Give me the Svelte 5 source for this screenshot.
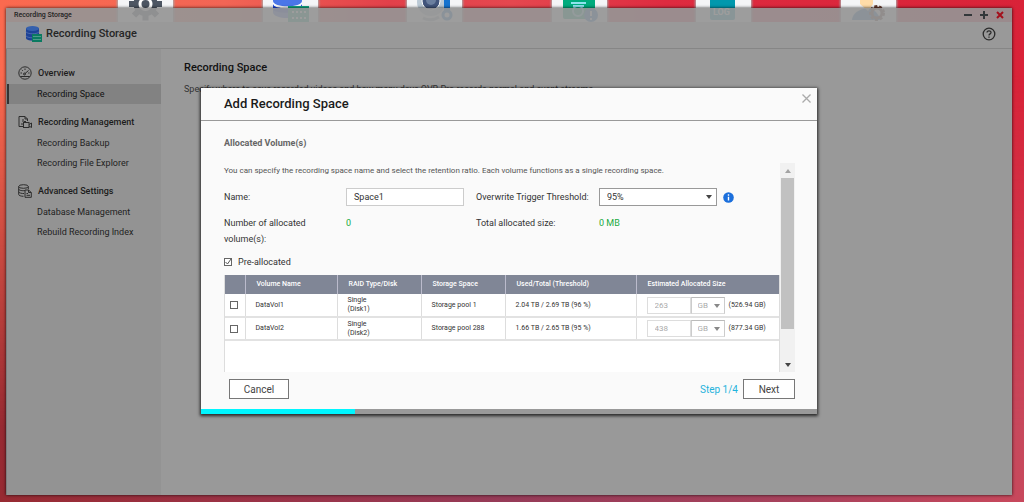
<script>
  let name = $state('Space1');
  let threshold = $state('95%');
  let preallocated = $state(true);
  let volumes = $state([
    { id: 1, name: 'DataVol1', disk: '(Disk1)', pool: 'Storage pool 1', used: '2.04 TB / 2.69 TB (96 %)', size: '263', max: '(526.94 GB)', checked: false },
    { id: 2, name: 'DataVol2', disk: '(Disk2)', pool: 'Storage pool 288', used: '1.66 TB / 2.65 TB (95 %)', size: '438', max: '(877.34 GB)', checked: false }
  ]);
  const step = 1;
  const steps = 4;
  const groups = [
    { icon: 'gauge', title: 'Overview', items: ['Recording Space'] },
    { icon: 'record', title: 'Recording Management', items: ['Recording Backup', 'Recording File Explorer'] },
    { icon: 'database', title: 'Advanced Settings', items: ['Database Management', 'Rebuild Recording Index'] }
  ];
  const current = 'Recording Space';
</script>

<div class="desktop">
  <div class="shortcuts" aria-hidden="true">
    <div class="tile">
      <svg viewBox="0 0 55 22"><g fill="#4d5663"><circle cx="27.500" cy="4" r="12" /><g stroke="#4d5663" stroke-width="6"><path d="M11 4H44M27.500-12V20.500M16-7.500L39 15.500M39-7.500L16 15.500" /></g></g><circle cx="27.500" cy="4" r="7" fill="#fff" /><circle cx="27.500" cy="4" r="4" fill="#4d5663" /></svg>
    </div>
    <div class="tile">
      <svg viewBox="0 0 55 22"><path d="M10-4V12C10 20 39 20 39 12V-4Z" fill="#4a76e8" /><path d="M10 1C10 8 39 8 39 1V4C39 10 10 10 10 4Z" fill="#fff" /><path d="M10 4C10 10 39 10 39 4V9C39 14 10 14 10 9Z" fill="#1c45dc" /><rect x="25" y="6" width="21" height="16" fill="#14a884" /><path d="M29 12H43M29 18H43" stroke="#fff" stroke-width="2" stroke-dasharray="2 2" /></svg>
    </div>
    <div class="tile">
      <svg viewBox="0 0 55 22"><circle cx="24" cy="2" r="14" fill="#bccad6" /><circle cx="24" cy="1" r="9" fill="#42557c" stroke="#fff" /><circle cx="24" cy="0" r="5" fill="#6b7f9f" /><path d="M40-2V11" stroke="#1673cf" stroke-width="6" /><circle cx="40" cy="15" r="4" fill="none" stroke="#1673cf" stroke-width="3" /><path d="M16 18Q24 22 32 17" fill="none" stroke="#a6b2bd" stroke-width="3" /></svg>
    </div>
    <div class="tile">
      <svg viewBox="0 0 55 22"><rect x="11" y="-6" width="32" height="25" rx="2" fill="#00ab7d" /><path d="M19 3H34M21 6H32" stroke="#8de3ee" stroke-width="2" /><circle cx="26" cy="11" r="5" fill="none" stroke="#8de3ee" stroke-width="2" /><circle cx="39" cy="15" r="7" fill="#2377c7" /><path d="M39 11V16M39 18V20" stroke="#fff" stroke-width="2" /></svg>
    </div>
    <div class="tile">
      <svg viewBox="0 0 55 22"><rect x="14" y="-6" width="25" height="26" rx="2" fill="#0098ad" /><text x="17" y="15" font-size="9" font-weight="700" fill="#fff">LOG</text></svg>
    </div>
    <div class="tile">
      <svg viewBox="0 0 55 22"><path d="M11 20Q12 10 27 8Q37 10 39 20Z" fill="#2a78c2" /><path d="M19-3H32V4L27 11L19 4Z" fill="#ffdca8" /><circle cx="36" cy="13" r="5" fill="none" stroke="#63392d" stroke-width="3" /><circle cx="36" cy="13" r="7" fill="none" stroke="#63392d" stroke-width="2" stroke-dasharray="3 2" /></svg>
    </div>
  </div>

  <div class="window">
    <div class="titlebar">
      <span>Recording Storage</span>
      <div class="controls">
        <button aria-label="Minimize"><svg viewBox="0 0 8 8"><path d="M0 4H8" stroke="#33373a" stroke-width="2" /></svg></button>
        <button aria-label="Maximize"><svg viewBox="0 0 8 8"><path d="M0 4H8M4 0V8" stroke="#33373a" stroke-width="2" /></svg></button>
        <button aria-label="Close window"><svg viewBox="0 0 8 8"><path d="M1 1L7 7M7 1L1 7" stroke="#a40f1b" stroke-width="2" /></svg></button>
      </div>
    </div>

    <header class="appbar">
      <svg class="logo" viewBox="0 0 17 17"><path d="M1 2V12C1 15.500 14 15.500 14 12V2Z" fill="#1d4296" /><path d="M1 5.500C1 8.500 14 8.500 14 5.500M1 9.500C1 12.500 14 12.500 14 9.500" fill="none" stroke="#5b78b5" stroke-width=".700" /><ellipse cx="7.500" cy="2.500" rx="6.500" ry="2.500" fill="#3560ad" /><rect x="7" y="8" width="10" height="8" fill="#0b7a61" /><path d="M8.500 10.500H16M8.500 13.500H16" stroke="#8fbfb2" stroke-dasharray="1 1" /></svg>
      <h1>Recording Storage</h1>
      <button class="help" aria-label="Help"><svg viewBox="0 0 14 14"><circle cx="7" cy="7" r="5.800" fill="none" stroke="#2c2c2c" stroke-width="1.300" /><path d="M5 5.600C5 3.200 9 3.200 9 5.500C9 6.900 7 6.900 7 8.500M7 9.500V10.800" fill="none" stroke="#2c2c2c" stroke-width="1.300" /></svg></button>
    </header>

    <div class="content">
      <nav>
        {#each groups as group}
          <section>
            <h2>
              <svg viewBox="0 0 14 14" fill="none" stroke="#2d2d2d">
                {#if group.icon === 'gauge'}
                  <circle cx="7" cy="7" r="6.200" /><path d="M2.300 10.500H11.700M6.500 8L10.500 4.500M2.500 7H4M7 2.500V4M3.800 3.800L4.800 4.800M10.200 7H11.500" /><circle cx="6.500" cy="8" r="1" />
                {:else if group.icon === 'record'}
                  <path d="M5 11.500H1V1.500H7L9.500 4V6M7 1.500V4H9.500M3 9H5M5 4V7" /><rect x="5.500" y="7.500" width="5.500" height="5" /><path d="M11 9.500L13.500 8V12.500L11 11M6 6.500H8" />
                {:else}
                  <ellipse cx="5.500" cy="2.500" rx="4.800" ry="1.800" /><path d="M.700 2.500V10.500C.700 11.500 3 12.300 5.500 12.300M10.300 2.500V5M.700 5C.700 6.500 5 7 7 6.500M.700 7.800C.700 9 4 9.600 6 9.500" /><path d="M7 6H10.500L13.300 8.500V13.300H7ZM10.500 6V8.500H13.300M8.500 9.500H10M8.500 11.300H12" />
                {/if}
              </svg>
              {group.title}
            </h2>
            <ul>
              {#each group.items as item}
                <li><a href="#top" class:active={item === current}>{item}</a></li>
              {/each}
            </ul>
          </section>
        {/each}
      </nav>
      <main>
        <h2>Recording Space</h2>
        <p>Specify where to save recorded videos and how many days QVR Pro records normal and event streams.</p>
      </main>
    </div>

    <div class="overlay">
      <div class="dialog" role="dialog" aria-modal="true" aria-labelledby="dialog-title">
        <div class="dialog-head">
          <h2 id="dialog-title">Add Recording Space</h2>
          <button aria-label="Close"><svg viewBox="0 0 9 9"><path d="M.500.500L8.500 8.500M8.500.500L.500 8.500" stroke="#aaa" stroke-width="1.300" /></svg></button>
        </div>

        <div class="dialog-body">
          <h3>Allocated Volume(s)</h3>
          <div class="scroller">
            <div class="pane">
              <p>You can specify the recording space name and select the retention ratio. Each volume functions as a single recording space.</p>
              <div class="form">
                <label for="name">Name:</label>
                <input id="name" type="text" bind:value={name} />
                <label for="threshold">Overwrite Trigger Threshold:</label>
                <div class="with-info">
                  <div class="select">
                    <select id="threshold" bind:value={threshold}>
                      <option>95%</option>
                      <option>90%</option>
                      <option>85%</option>
                    </select>
                    <svg viewBox="0 0 6 4"><path d="M0 0H6L3 4Z" fill="#444" /></svg>
                  </div>
                  <svg class="info" viewBox="0 0 11 11"><circle cx="5.500" cy="5.500" r="5.300" fill="#1b6fdc" /><path d="M5.500 2.300V3.700M5.500 4.700V8.500" stroke="#fff" stroke-width="1.400" /></svg>
                </div>
                <span>Number of allocated volume(s):</span>
                <output>0</output>
                <span>Total allocated size:</span>
                <output>0 MB</output>
              </div>
              <label class="pre">
                <input type="checkbox" bind:checked={preallocated} />
                <svg viewBox="0 0 8 8"><path d="M1.500 4L3.500 6L7 1" fill="none" stroke="#555" /></svg>
                Pre-allocated
              </label>
              <div class="table-box">
                <table>
                  <colgroup><col class="c-check" /><col class="c-name" /><col class="c-raid" /><col class="c-pool" /><col class="c-used" /><col /></colgroup>
                  <thead>
                    <tr><th></th><th>Volume Name</th><th>RAID Type/Disk</th><th>Storage Space</th><th>Used/Total (Threshold)</th><th>Estimated Allocated Size</th></tr>
                  </thead>
                  <tbody>
                    {#each volumes as volume (volume.id)}
                      <tr>
                        <td class="check"><input type="checkbox" aria-label={volume.name} bind:checked={volume.checked} /></td>
                        <td>{volume.name}</td>
                        <td>Single<br />{volume.disk}</td>
                        <td>{volume.pool}</td>
                        <td>{volume.used}</td>
                        <td>
                          <div class="size">
                            <input type="text" aria-label="Allocated size" value={volume.size} disabled />
                            <div class="select unit">
                              <select aria-label="Unit" disabled><option>GB</option></select>
                              <svg viewBox="0 0 6 4"><path d="M0 0H6L3 4Z" fill="#888" /></svg>
                            </div>
                            <span>{volume.max}</span>
                          </div>
                        </td>
                      </tr>
                    {/each}
                  </tbody>
                </table>
              </div>
            </div>
            <div class="scrollbar" aria-hidden="true">
              <svg viewBox="0 0 6 4"><path d="M0 4H6L3 0Z" fill="#a3a3a3" /></svg>
              <div class="track"><div class="thumb"></div></div>
              <svg viewBox="0 0 6 4"><path d="M0 0H6L3 4Z" fill="#444" /></svg>
            </div>
          </div>
        </div>

        <footer>
          <button class="cancel">Cancel</button>
          <span>Step {step}/{steps}</span>
          <button class="next">Next</button>
        </footer>
        <div class="progress"><div style="width: {(step / steps) * 100}%"></div></div>
      </div>
    </div>
  </div>
</div>

<style>
  :global(body) { margin: 0; }
  .desktop, .desktop * { box-sizing: border-box; }
  .desktop {
    position: relative;
    display: flex;
    min-height: 100vh;
    padding: 8px 12px 7px 6px;
    overflow: hidden;
    font-family: Roboto, "Liberation Sans", sans-serif;
    font-size: 9px;
    color: #333;
    background: linear-gradient(to right, #fb6a4f, #f26555 22%, #e2404a 38%, #e5474f 50%, #de2b40 65%, #d92238);
  }
  .desktop::before {
    content: "";
    position: absolute;
    inset: 0;
    background: linear-gradient(to right, #972a32, #9b3143 20%, #963b58 50%, #a8425c 78%, #c8485c);
    mask-image: linear-gradient(to bottom, transparent 15%, #000 85%);
  }
  h1, h2, h3, p, ul { margin: 0; padding: 0; font-weight: 500; }
  ul { list-style: none; }
  button, input, select { margin: 0; padding: 0; font: inherit; color: inherit; border-radius: 0; }
  button { display: grid; place-items: center; border: 0; background: none; }
  svg { display: block; flex: none; }

  .shortcuts {
    position: absolute;
    inset: 0 128px auto 118px;
    display: flex;
    justify-content: space-between;
  }
  .tile { width: 55px; height: 22px; background: #f4f5f7; box-shadow: 0 0 2px 1px #aaa; }

  .window {
    position: relative;
    flex: 1;
    display: flex;
    flex-direction: column;
    box-shadow: 0 0 3px rgba(0, 0, 0, 0.8);
  }
  .titlebar {
    display: flex;
    justify-content: space-between;
    align-items: center;
    height: 14px;
    padding: 0 8px;
    background: rgba(149, 149, 149, 0.92);
    font-size: 7px;
    font-weight: 500;
    color: #222;
  }
  .controls { display: flex; gap: 8px; }
  .controls svg { width: 8px; height: 8px; }
  .appbar {
    display: flex;
    align-items: center;
    gap: 4px;
    height: 27px;
    padding: 0 16px 2px 19px;
    background: #999;
    border-bottom: 1px solid #868686;
  }
  .appbar h1 { flex: 1; font-size: 11px; line-height: 16px; color: #262626; }
  .logo { width: 17px; height: 17px; }
  .help svg { width: 14px; height: 14px; }

  .content { flex: 1; display: flex; background: #999; }
  nav {
    display: flex;
    flex-direction: column;
    gap: 7px;
    width: 155px;
    padding-top: 13px;
    background: #939393;
    border-left: 1px solid #7d7d7d;
  }
  nav h2 {
    display: flex;
    align-items: center;
    gap: 6px;
    height: 22px;
    padding-left: 11px;
    font-size: 9px;
    color: #1c1c1c;
  }
  nav svg { width: 14px; height: 14px; }
  nav a {
    display: block;
    padding-left: 28px;
    border-left: 2px solid transparent;
    font-size: 9px;
    font-weight: 400;
    line-height: 20px;
    color: #222;
    text-decoration: none;
  }
  nav a.active { background: #828282; border-color: #333; color: #111; }
  main { padding: 11px 23px; }
  main h2 { font-size: 11px; line-height: 16px; color: #111; }
  main p { margin-top: 5px; font-size: 9px; font-weight: 400; line-height: 16px; color: #333; }

  .overlay { position: absolute; inset: 0; display: grid; place-items: center; padding-bottom: 1px; }
  .dialog {
    width: min(616px, 100% - 32px);
    background: #fafafa;
    box-shadow: 0 1px 3px 1px rgba(0, 0, 0, 0.75);
  }
  .dialog-head {
    display: flex;
    justify-content: space-between;
    align-items: flex-start;
    padding: 6px 6px 6px 23px;
    border-bottom: 1px solid #999;
  }
  .dialog-head h2 { font-size: 13px; line-height: 20px; color: #1a1a1a; }
  .dialog-head svg { width: 9px; height: 9px; }
  .dialog-body { padding: 14px 22px 0 23px; }
  h3 { margin-bottom: 12px; font-size: 9px; line-height: 16px; font-weight: 700; color: #666; }
  .scroller { display: flex; }
  .pane { flex: 1; min-width: 0; }
  .pane p { margin-bottom: 9px; font-size: 8px; font-weight: 400; line-height: 16px; color: #555; }
  .form {
    display: grid;
    grid-template-columns: 110px 118px 111px 1fr;
    column-gap: 12px;
    row-gap: 9px;
    line-height: 16px;
  }
  .form label { align-self: center; white-space: nowrap; }
  .form span { padding-right: 24px; }
  .form input { width: 118px; height: 18px; padding: 0 7px; border: 1px solid #ccc; background: #fff; }
  .form output { color: #20ab40; }
  .with-info { display: flex; align-items: center; gap: 6px; }
  .info { width: 11px; height: 11px; }
  .select { position: relative; width: 118px; }
  select {
    display: block;
    appearance: none;
    width: 100%;
    height: 18px;
    padding: 0 7px;
    border: 1px solid #999;
    background: #fff;
    opacity: 1;
  }
  .select svg { position: absolute; right: 5px; top: 7px; width: 6px; height: 4px; pointer-events: none; }
  input[type="checkbox"] {
    appearance: none;
    width: 8px;
    height: 8px;
    border: 1px solid #666;
    background: #fff;
  }
  .pre { display: grid; grid-template-columns: 8px 1fr; align-items: center; column-gap: 6px; margin: 7px 0 5px; line-height: 16px; }
  .pre input, .pre svg { grid-area: 1 / 1; }
  .pre svg { position: relative; width: 8px; height: 8px; pointer-events: none; }
  .pre input:not(:checked) + svg { visibility: hidden; }

  .table-box { min-height: 97px; background: #fff; border-left: 1px solid #ddd; border-right: 1px solid #ddd; }
  table { width: 100%; table-layout: fixed; border-collapse: collapse; font-size: 7px; line-height: 9px; }
  .c-check { width: 20px; }
  .c-name { width: 92px; }
  .c-raid { width: 84px; }
  .c-pool { width: 84px; }
  .c-used { width: 131px; }
  th { height: 19px; padding: 0 0 0 11px; background: #808696; color: #fff; font-weight: 500; text-align: left; white-space: nowrap; }
  th + th { border-left: 1px solid #bbc; }
  td { height: 23px; padding: 0 0 0 10px; border-bottom: 2px solid #e2e2e2; color: #333; }
  td + td { border-left: 1px solid #ddd; }
  td.check { padding: 0 0 0 5px; }
  td.check input { display: block; }
  .size { display: flex; align-items: center; }
  .size input { width: 44px; height: 17px; padding: 0 7px; border: 1px solid #ddd; background: #fff; color: #aaa; font-size: 8px; }
  .unit { width: 34px; margin-right: 4px; font-size: 8px; }
  .unit select { height: 17px; padding: 0 6px; border-color: #bbb #ccc #ddd; color: #aaa; }

  .scrollbar {
    display: flex;
    flex-direction: column;
    align-items: center;
    width: 15px;
    padding: 6px 1px 5px;
    background: #f1f1f1;
  }
  .scrollbar svg { width: 6px; height: 4px; }
  .track { flex: 1; align-self: stretch; margin: 5px 0; }
  .thumb { height: 84%; background: #c1c1c1; }

  footer { display: flex; align-items: center; gap: 5px; padding: 7px 22px 10px 28px; font-size: 10px; }
  footer button { height: 20px; border: 1px solid #777; background: #fff; color: #444; }
  footer span { margin-left: auto; color: #1fb3dc; }
  .cancel { width: 60px; }
  .next { width: 52px; }
  .progress { height: 5px; background: #999; }
  .progress div { height: 100%; background: #00f6ff; }
</style>
